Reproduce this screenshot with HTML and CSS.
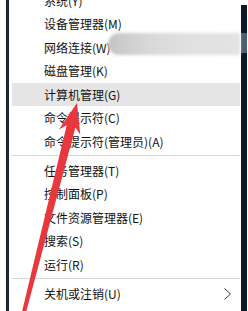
FILE: index.html
```html
<!DOCTYPE html>
<html lang="zh-CN">
<head>
<meta charset="utf-8">
<link rel="stylesheet" href="styles.css">
</head>
<body>
<div class="screen">
  <div class="edge-left"></div>
  <div class="menu">
    <ul class="list">
      <li class="item">系统(Y)</li>
      <li class="item">设备管理器(M)</li>
      <li class="item">网络连接(W)</li>
      <li class="item">磁盘管理(K)</li>
      <li class="item active">计算机管理(G)</li>
      <li class="item">命令提示符(C)</li>
      <li class="item">命令提示符(管理员)(A)</li>
      <li class="sep"></li>
      <li class="item">任务管理器(T)</li>
      <li class="item">控制面板(P)</li>
      <li class="item">文件资源管理器(E)</li>
      <li class="item">搜索(S)</li>
      <li class="item">运行(R)</li>
      <li class="sep"></li>
      <li class="item">关机或注销(U)<svg class="chev" width="7" height="12" viewBox="0 0 7 12"><polyline points="0.5,0.5 6.5,6 0.5,11.5" fill="none" stroke="#3a3a3a" stroke-width="1"/></svg></li>
      <li class="item">桌面(D)</li>
    </ul>
  </div>
  <div class="edge-right"><div class="thumb"></div></div>
  <div class="blur"></div>
  <svg class="arrow" width="248" height="311" viewBox="0 0 248 311">
    <polygon points="77,103 80.3,134.8 75.4,127.4 24.9,316.5 21.1,315.5 66.7,125.2 58.9,129.4" fill="#e8383d"/>
  </svg>
</div>
</body>
</html>
```
FILE: styles.css
```css
* { box-sizing: border-box; }
html, body { margin: 0; padding: 0; background: #fff; }
.screen {
  position: relative;
  width: 248px;
  height: 311px;
  overflow: hidden;
  display: flex;
  padding-left: 6px;
  padding-right: 1px;
  background: #fff;
}
.edge-left { width: 3px; background: #1b2433; }
.menu {
  width: 232px;
  background: #fff;
  padding: 0 1px 0 3px;
}
.edge-right {
  width: 6px;
  margin-top: 5px;
  background: #0c1828;
}
.thumb { margin-top: 28px; height: 20px; background: #4c5e72; }
.list {
  list-style: none;
  margin: -11.25px 0 0;
  padding: 0;
}
.item {
  height: 23.5px;
  display: flex;
  align-items: center;
  padding-left: 32px;
  font-family: "Noto Sans CJK SC", "Noto Sans", sans-serif;
  font-size: 12px;
  line-height: 1;
  color: #111;
  white-space: nowrap;
}
.item.active { background: #e5e5e5; }
.sep {
  height: 1px;
  background: #d6d6d6;
  margin: 2px 0 2.5px;
}
.chev { margin-left: auto; margin-right: 9px; }
.blur {
  position: absolute;
  left: 108px;
  top: 33px;
  width: 132px;
  height: 22px;
  border-radius: 11px 0 0 11px;
  background: linear-gradient(to right, #c2c2c2 0, #cbcbcb 10%, #d8d8d8 30%, #e0e0e0 60%, #e3e3e3 100%);
  filter: blur(1.5px);
}
.arrow { position: absolute; left: 0; top: 0; }
```
